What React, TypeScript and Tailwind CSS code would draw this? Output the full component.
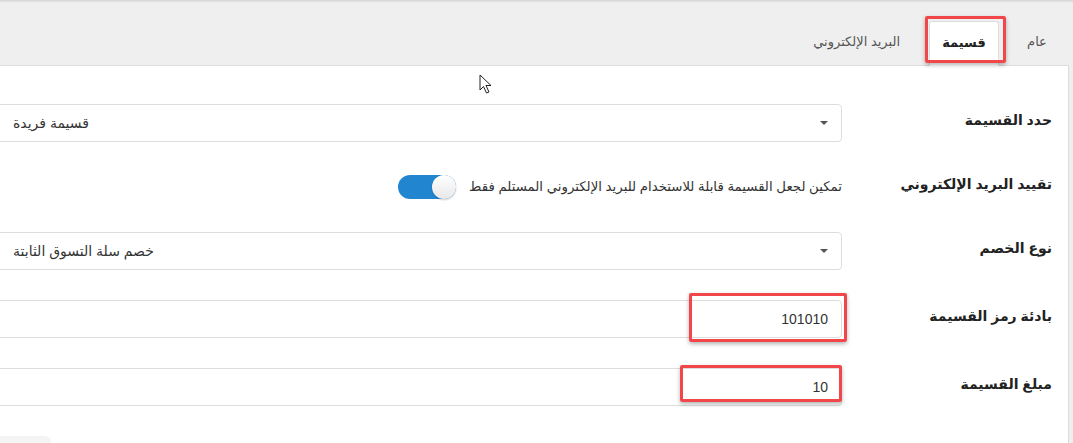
import React from 'react'

const font = "font-['Liberation_Sans','DejaVu_Sans',sans-serif]"

function Label({ children }: { children: React.ReactNode }) {
  return (
    <div className="w-[210px] shrink-0 relative -top-[3px] text-[14px] leading-[20px] font-semibold text-[#222] text-right">
      {children}
    </div>
  )
}

function SelectBox({ value }: { value: string }) {
  return (
    <div
      dir="ltr"
      className="flex-1 h-[38px] flex items-center justify-between border border-[#ddd] rounded-[4px] bg-white pl-[52px] pr-[13px]"
    >
      <span dir="rtl" className="text-[14px] text-[#333]">{value}</span>
      <span className="w-0 h-0 border-x-[4px] border-t-[4px] border-x-transparent border-t-[#555]" />
    </div>
  )
}

function TextBox({ value }: { value: string }) {
  return (
    <div
      dir="ltr"
      className="flex-1 h-[38px] flex items-center justify-end border border-[#ddd] rounded-[4px] bg-white pr-[13px]"
    >
      <span className="text-[14px] text-[#333]">{value}</span>
    </div>
  )
}

export default function App() {
  return (
    <div
      dir="rtl"
      className={`relative w-[1073px] h-[443px] overflow-hidden bg-[#efefef] shadow-[inset_0_3px_3px_-2px_rgba(0,0,0,0.15)] ${font}`}
    >
      {/* tabs */}
      <div className="flex items-end h-[65px] pr-[4px]">
        <div className="w-[70px] h-[45px] pb-[2px] flex items-center justify-center pl-[6px] text-[13px] text-[#555]">
          عام
        </div>
        <div className="w-[70px] h-[45px] pb-[2px] -mb-px flex items-center justify-center bg-white border border-b-0 border-[#ddd] rounded-t-[3px] text-[13px] font-bold text-[#222] relative z-10">
          قسيمة
        </div>
        <div className="h-[45px] pb-[2px] flex items-center pr-[29px] pl-[12px] text-[13px] text-[#555]">
          البريد الإلكتروني
        </div>
      </div>

      {/* panel */}
      <div className="bg-white border-t border-r border-[#ddd] mr-[4px] -ml-[40px] h-[400px] pr-[16px] pt-[38px]">
        <div className="flex items-center">
          <Label>حدد القسيمة</Label>
          <SelectBox value="قسيمة فريدة" />
        </div>

        <div className="flex items-center h-[24px] mt-[33px]">
          <Label>تقييد البريد الإلكتروني</Label>
          <div className="flex-1 flex items-center gap-[13px]">
            <span className="text-[13.3px] leading-[20px] text-[#333]">
              تمكين لجعل القسيمة قابلة للاستخدام للبريد الإلكتروني المستلم فقط
            </span>
            <div dir="ltr" className="w-[58px] h-[24px] rounded-full bg-[#2185d0] flex justify-end">
              <div className="w-[24px] h-[24px] rounded-full bg-gradient-to-b from-white to-[#e8e8e8] shadow-[0_1px_2px_rgba(0,0,0,0.2)]" />
            </div>
          </div>
        </div>

        <div className="flex items-center mt-[33px]">
          <Label>نوع الخصم</Label>
          <SelectBox value="خصم سلة التسوق الثابتة" />
        </div>

        <div className="flex items-center mt-[30px]">
          <Label>بادئة رمز القسيمة</Label>
          <TextBox value="101010" />
        </div>

        <div className="flex items-center mt-[30px]">
          <Label>مبلغ القسيمة</Label>
          <TextBox value="10" />
        </div>

        <div dir="ltr" className="mt-[30px] flex">
          <div className="w-[92px] h-[30px] rounded-[8px] bg-gradient-to-b from-[#f3f3f3] to-white" />
        </div>
      </div>

      {/* highlight boxes */}
      <div className="absolute left-[925px] top-[16px] w-[81px] h-[47px] border-[3px] border-[#f2474a] rounded-[2px] shadow-[0_2px_4px_rgba(0,0,0,0.3)] z-20" />
      <div className="absolute left-[689px] top-[293px] w-[158px] h-[49px] border-[3px] border-[#f2474a] rounded-[2px] shadow-[0_2px_4px_rgba(0,0,0,0.3)]" />
      <div className="absolute left-[680px] top-[365px] w-[162px] h-[37px] border-[3px] border-[#f2474a] rounded-[2px] shadow-[0_2px_4px_rgba(0,0,0,0.3)]" />

      {/* mouse pointer */}
      <svg className="absolute left-[479px] top-[74px]" width="14" height="20" viewBox="0 0 14 20">
        <path
          d="M1 1 L1 16 L4.5 12.5 L7.5 19 L10 18 L7 11.5 L12 11.5 Z"
          fill="white"
          stroke="#222"
          strokeWidth="1"
          strokeLinejoin="round"
        />
      </svg>
    </div>
  )
}
